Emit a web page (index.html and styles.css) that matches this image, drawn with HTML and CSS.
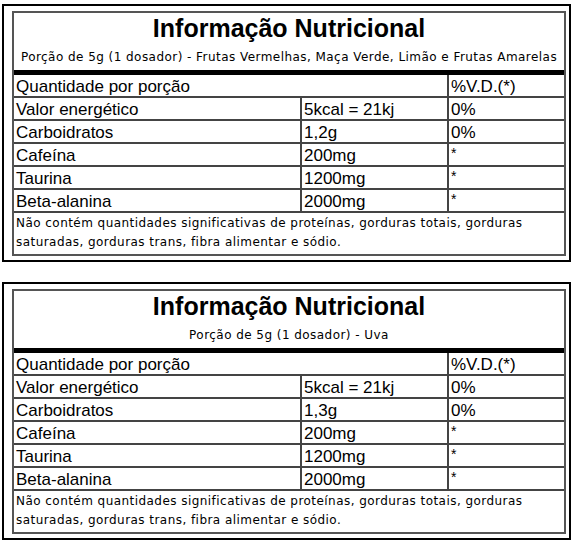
FILE: index.html
```html
<!DOCTYPE html>
<html lang="pt">
<head>
<meta charset="utf-8">
<title>Informação Nutricional</title>
<link rel="stylesheet" href="styles.css">
</head>
<body>
<div class="card">
  <div class="label">
    <div class="head">
      <div class="title">Informação Nutricional</div>
      <div class="sub">Porção de 5g (1 dosador) - Frutas Vermelhas, Maça Verde, Limão e Frutas Amarelas</div>
    </div>
    <div class="bar"></div>
    <table class="facts">
      <colgroup><col class="c1"><col class="c2"><col class="c3"></colgroup>
      <tr><td colspan="2">Quantidade por porção</td><td>%V.D.(*)</td></tr>
      <tr><td>Valor energético</td><td>5kcal = 21kj</td><td>0%</td></tr>
      <tr><td>Carboidratos</td><td>1,2g</td><td>0%</td></tr>
      <tr><td>Cafeína</td><td>200mg</td><td class="star">*</td></tr>
      <tr><td>Taurina</td><td>1200mg</td><td class="star">*</td></tr>
      <tr><td>Beta-alanina</td><td>2000mg</td><td class="star">*</td></tr>
      <tr><td colspan="3" class="note">Não contém quantidades significativas de proteínas, gorduras totais, gorduras saturadas, gorduras trans, fibra alimentar e sódio.</td></tr>
    </table>
  </div>
</div>
<div class="card">
  <div class="label">
    <div class="head">
      <div class="title">Informação Nutricional</div>
      <div class="sub">Porção de 5g (1 dosador) - Uva</div>
    </div>
    <div class="bar"></div>
    <table class="facts">
      <colgroup><col class="c1"><col class="c2"><col class="c3"></colgroup>
      <tr><td colspan="2">Quantidade por porção</td><td>%V.D.(*)</td></tr>
      <tr><td>Valor energético</td><td>5kcal = 21kj</td><td>0%</td></tr>
      <tr><td>Carboidratos</td><td>1,3g</td><td>0%</td></tr>
      <tr><td>Cafeína</td><td>200mg</td><td class="star">*</td></tr>
      <tr><td>Taurina</td><td>1200mg</td><td class="star">*</td></tr>
      <tr><td>Beta-alanina</td><td>2000mg</td><td class="star">*</td></tr>
      <tr><td colspan="3" class="note">Não contém quantidades significativas de proteínas, gorduras totais, gorduras saturadas, gorduras trans, fibra alimentar e sódio.</td></tr>
    </table>
  </div>
</div>
</body>
</html>
```
FILE: styles.css
```css
html, body {
  margin: 0;
  background: #fff;
}
body {
  padding: 4px 0 0 2px;
  font-family: "Liberation Sans", Arial, sans-serif;
  color: #000;
}
.card {
  width: 569px;
  box-sizing: border-box;
  border: 2px solid #000;
  padding: 5px 3px 4px 8px;
  margin-bottom: 20px;
}
.label {
  border: 2px solid #555;
}
.head {
  text-align: center;
  padding-bottom: 5px;
}
.title {
  font-weight: bold;
  font-size: 25px;
  line-height: 30px;
}
.sub {
  font-family: "DejaVu Sans", Verdana, sans-serif;
  font-size: 12px;
  letter-spacing: 0.45px;
  line-height: 16px;
  margin-top: 6px;
  color: #000;
}
.bar {
  height: 5px;
  background: #000;
}
.facts {
  width: 100%;
  border-collapse: collapse;
  table-layout: fixed;
}
.c1 { width: 287px; }
.c2 { width: 147px; }
.c3 { width: 116px; }
.facts td {
  border-bottom: 2px solid #444;
  border-left: 2px solid #444;
  padding: 2px 2px 0 2px;
  height: 19px;
  font-size: 17px;
  line-height: 19px;
  vertical-align: bottom;
  white-space: nowrap;
}
.facts td:first-child {
  border-left: none;
}
.facts tr:last-child td {
  border-bottom: none;
}
.facts td.star {
  vertical-align: top;
  font-size: 14px;
  line-height: 14px;
}
.facts td.note {
  white-space: normal;
  font-family: "DejaVu Sans", Verdana, sans-serif;
  font-size: 12px;
  letter-spacing: 0.45px;
  line-height: 19px;
  padding: 1px 3px 2px 2px;
  vertical-align: top;
  color: #000;
}
```
